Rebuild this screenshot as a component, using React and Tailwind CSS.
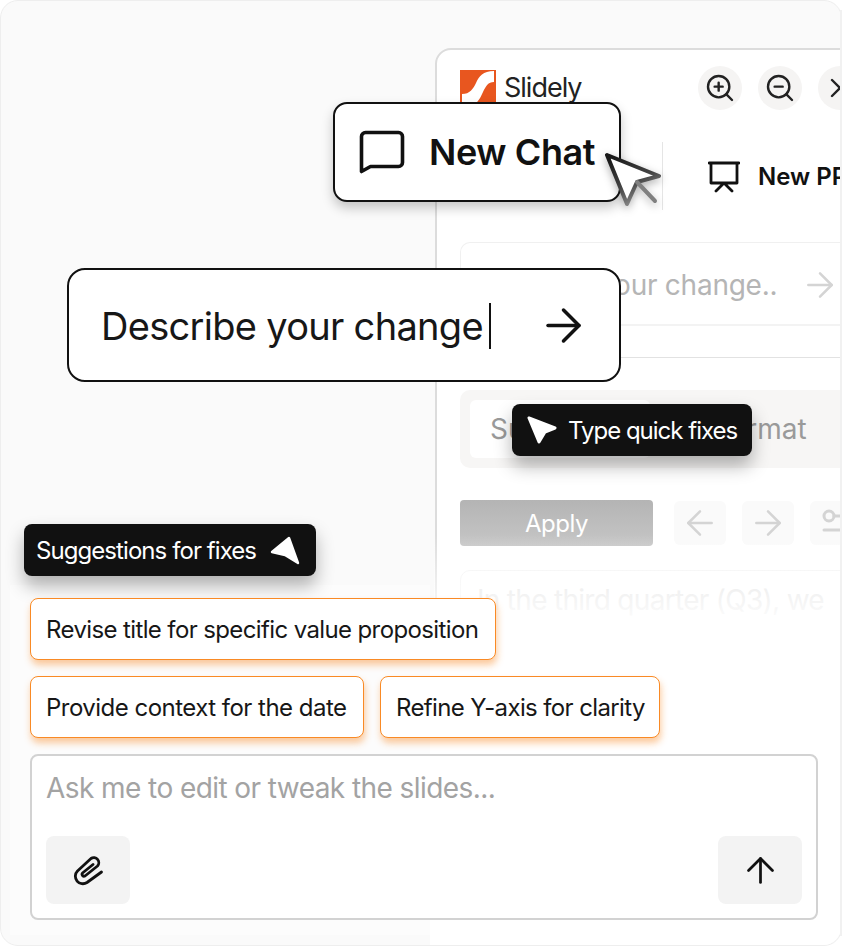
import React from "react";
import { ZoomIn, ZoomOut, X, ArrowRight, ArrowLeft, ArrowUp } from "lucide-react";

function Logo() {
  return (
    <svg width="36" height="36" viewBox="0 0 36 36" className="shrink-0">
      <rect width="36" height="36" fill="#e8561f" />
      <path d="M2 36 L2 24 C10 24 13 19 16 13 C19 6 23 1 34 1 L34 12 C28 12 26 16 23 22 C20 29 16 36 8 36 Z" fill="#fff" />
    </svg>
  );
}

function ChatIcon() {
  return (
    <svg width="46" height="44" viewBox="0 0 46 44" fill="none" stroke="#111" strokeWidth="3.6" strokeLinejoin="round" strokeLinecap="round">
      <path d="M2.5 6.5 a4 4 0 0 1 4 -4 h33 a4 4 0 0 1 4 4 v26 a4 4 0 0 1 -4 4 h-28 l-9 5 z" />
    </svg>
  );
}

function BigCursor() {
  return (
    <svg width="60" height="60" viewBox="0 0 60 60" fill="none" className="drop-shadow-[0_3px_4px_rgba(0,0,0,0.3)]">
      <defs>
        <linearGradient id="cursorStroke" x1="10" y1="5" x2="35" y2="55" gradientUnits="userSpaceOnUse">
          <stop offset="0" stopColor="#1a1a1a" />
          <stop offset="0.55" stopColor="#444" />
          <stop offset="1" stopColor="#999" />
        </linearGradient>
      </defs>
      <path d="M3 3 L55 24 L33 30 L23 52 Z" fill="#fff" stroke="url(#cursorStroke)" strokeWidth="4" strokeLinejoin="round" />
      <path d="M33 30 L51 49" stroke="#808080" strokeWidth="4" strokeLinecap="round" />
    </svg>
  );
}

// white pointer in the "Type quick fixes" tag, tip at the upper left
function PointerTopLeft() {
  return (
    <svg width="30" height="28" viewBox="0 0 30 28" className="shrink-0">
      <path d="M2 2 L28 12 L18 16 L12 26 Z" fill="#fff" stroke="#fff" strokeWidth="3" strokeLinejoin="round" />
    </svg>
  );
}

// white pointer in the "Suggestions for fixes" tag, tip at the top
function PointerTopRight() {
  return (
    <svg width="30" height="30" viewBox="0 0 30 30" className="shrink-0">
      <path d="M2 17 L19 3 L28 28 L15 20 Z" fill="#fff" stroke="#fff" strokeWidth="2.4" strokeLinejoin="round" />
    </svg>
  );
}

function GhostIconButton({ children }) {
  return <div className="w-[52px] h-[44px] shrink-0 rounded-md bg-[#fafafa] flex items-center justify-center text-[#d4d4d4]">{children}</div>;
}

function SlideWindow() {
  return (
    <div className="absolute left-[435px] top-[48px] w-[460px] h-[640px] bg-white border-2 border-[#dcdcdc] rounded-tl-[16px] overflow-hidden">
      <div className="flex items-center h-[76px] pl-[23px]">
        <div className="flex items-center gap-2 w-[238px]">
          <Logo />
          <span className="text-[27px] pt-[1px] text-[#222] tracking-[-1px]">Slidely</span>
        </div>
        <div className="flex gap-4">
          {[ZoomIn, ZoomOut, X].map((Icon, i) => (
            <div key={i} className="w-[44px] h-[44px] shrink-0 rounded-full bg-[#f5f4f3] flex items-center justify-center">
              <Icon size={32} color="#222" strokeWidth={1.8} />
            </div>
          ))}
        </div>
      </div>

      <div className="relative h-[116px] flex items-center pl-[271px]">
        <div className="absolute left-[225px] top-[16px] h-[68px] w-px bg-[#e5e5e5]" />
        <div className="flex items-center gap-[18px] mt-[-14px] whitespace-nowrap">
          <svg width="32" height="32" viewBox="0 0 32 32" fill="none" stroke="#111" strokeWidth="2.8" strokeLinecap="round" strokeLinejoin="round">
            <path d="M1 2 H31 M3 2 V22 H29 V2 M16 22 L8 30 M16 22 L24 30" />
          </svg>
          <span className="text-[24px] font-semibold text-[#111]">New PPT</span>
        </div>
      </div>

      <div className="ml-[23px] h-[116px] border border-[#f0f0f0] border-b-[#e2e2e2] rounded-tl-[10px] flex flex-col">
        <div className="h-[83px] pt-[3px] border-b-2 border-[#f3f3f3] flex items-center pl-[14px] text-[28px] tracking-[-0.25px] text-[#b5b5b5] whitespace-nowrap">
          Describe your change..
          <ArrowRight size={40} color="#d4d4d4" strokeWidth={1.5} className="ml-[23px] shrink-0" />
        </div>
      </div>

      <div className="ml-[23px] mt-[32px] h-[78px] bg-[#f7f6f5] rounded-l-[10px] flex items-center pl-[10px] text-[28px] text-[#9a9a9a] whitespace-nowrap">
        <div className="w-[180px] h-[58px] bg-white rounded-md flex items-center pl-[20px] shrink-0">Summary</div>
        <span className="pl-[64px]">Format</span>
      </div>

      <div className="ml-[23px] mt-[32px] flex items-center gap-4">
        <div className="w-[193px] h-[46px] pt-[2px] shrink-0 rounded bg-gradient-to-b from-[#b4b4b4] to-[#c6c6c6] flex items-center justify-center text-white text-[24px] tracking-[-0.5px]">Apply</div>
        <div className="flex gap-4 pl-[5px]">
          <GhostIconButton><ArrowLeft size={40} strokeWidth={1.5} /></GhostIconButton>
          <GhostIconButton><ArrowRight size={40} strokeWidth={1.5} /></GhostIconButton>
          <GhostIconButton>
            <svg width="40" height="40" viewBox="0 0 40 40" fill="none" stroke="currentColor" strokeWidth="3" strokeLinecap="round">
              <circle cx="13" cy="13" r="5" />
              <path d="M18 13 H36 M8 27 H34 M27 23 V32" />
            </svg>
          </GhostIconButton>
        </div>
      </div>

      <div className="ml-[23px] mt-[24px] h-[200px] border border-[#f2f2f2] rounded-tl-[10px] pl-[16px] pt-[8px] text-[28px] tracking-[-0.7px] text-[#dedede] whitespace-nowrap">
        In the third quarter (Q3), we
      </div>
    </div>
  );
}

function Chip({ className, children }) {
  return (
    <div className={`h-[62px] pt-[2px] bg-white border border-[#f98a25] rounded-[8px] pl-[15px] flex items-center text-[24px] text-[#171717] whitespace-nowrap shadow-[1px_5px_7px_rgba(249,138,37,0.45)] ${className}`}>
      {children}
    </div>
  );
}

export default function App() {
  return (
    <div className="relative w-[842px] h-[946px] overflow-hidden bg-white font-['Inter',sans-serif]">
      <div className="absolute inset-0 bg-[#fafafa] border border-[#eeeeee] rounded-[18px]" />
      <SlideWindow />
      {/* fade of the window towards the bottom */}
      <div className="absolute left-[434px] top-[535px] w-[408px] h-[95px] bg-gradient-to-b from-white/0 to-white" />
      <div className="absolute left-[430px] top-[630px] w-[411px] h-[315px] bg-white rounded-br-[18px]" />
      <div className="absolute right-0 top-[10px] w-[2px] h-[926px] bg-[#f1f1f1]" />

      <div className="absolute left-[333px] top-[102px] w-[288px] h-[100px] bg-white border-2 border-[#111] rounded-[14px] flex items-center pl-[24px] gap-[24px] shadow-[0_6px_12px_rgba(0,0,0,0.22)]">
        <ChatIcon />
        <span className="text-[36px] font-semibold text-[#111] tracking-[-0.4px] whitespace-nowrap">New Chat</span>
      </div>
      <div className="absolute left-[604px] top-[152px]">
        <BigCursor />
      </div>

      <div className="absolute left-[67px] top-[268px] w-[554px] h-[114px] pt-[2px] bg-white border-2 border-[#111] rounded-[18px] flex items-center pl-[32px]">
        <span className="text-[38px] text-[#171717] whitespace-nowrap tracking-[-0.7px]">Describe your change</span>
        <span className="w-[2px] h-[46px] bg-[#111] ml-[6px] shrink-0" />
        <ArrowRight size={53} color="#111" strokeWidth={1.6} className="ml-[46px] mt-[-2px] shrink-0" />
      </div>

      <div className="absolute left-[512px] top-[404px] w-[240px] h-[52px] bg-[#111] rounded-[8px] flex items-center pl-[15px] gap-[11px] text-white text-[24px] tracking-[-1px] whitespace-nowrap shadow-[0_10px_18px_rgba(0,0,0,0.3)]">
        <PointerTopLeft />
        <span className="pt-[2px]">Type quick fixes</span>
      </div>

      {/* chat panel at the lower left */}
      <div className="absolute left-[10px] top-[585px] w-[420px] h-[350px] bg-[#fcfcfc]" />
      <div className="absolute left-[24px] top-[524px] w-[292px] h-[52px] bg-[#111] rounded-[8px] flex items-center pl-[12px] gap-[14px] text-white text-[24px] tracking-[-0.93px] whitespace-nowrap shadow-[0_10px_18px_rgba(0,0,0,0.3)]">
        <span className="pt-[2px]">Suggestions for fixes</span>
        <PointerTopRight />
      </div>

      <div className="absolute left-[30px] top-[598px] w-[788px] flex flex-col gap-4">
        <div className="flex">
          <Chip className="w-[466px] tracking-[-0.62px]">Revise title for specific value proposition</Chip>
        </div>
        <div className="flex gap-4">
          <Chip className="w-[334px] tracking-[-0.52px]">Provide context for the date</Chip>
          <Chip className="w-[280px] tracking-[-0.62px]">Refine Y-axis for clarity</Chip>
        </div>
        <div className="h-[166px] bg-white border-2 border-[#d2d2d2] rounded-[8px] px-[14px] pt-[14px] pb-[14px] flex flex-col justify-between">
          <div className="text-[28px] leading-[36px] text-[#a3a3a3] tracking-[-0.57px] whitespace-nowrap">Ask me to edit or tweak the slides...</div>
          <div className="flex justify-between">
            <div className="w-[84px] h-[68px] rounded-[8px] bg-[#f3f3f3] flex items-center justify-center">
              <svg width="30" height="31" viewBox="0 0 30 31" fill="none" stroke="#111" strokeWidth="2.8" strokeLinecap="round" strokeLinejoin="round">
                <path d="M28.5 17 L14 27.5 a7.5 7.5 0 0 1 -9.5 -11.5 L18 3.5 a5 5 0 0 1 6.5 7.5 L12 21 a2 2 0 0 1 -2.5 -3 L20 9.5" />
              </svg>
            </div>
            <div className="w-[84px] h-[68px] rounded-[8px] bg-[#f3f3f3] flex items-center justify-center">
              <ArrowUp size={41} color="#111" strokeWidth={1.6} />
            </div>
          </div>
        </div>
      </div>
    </div>
  );
}
